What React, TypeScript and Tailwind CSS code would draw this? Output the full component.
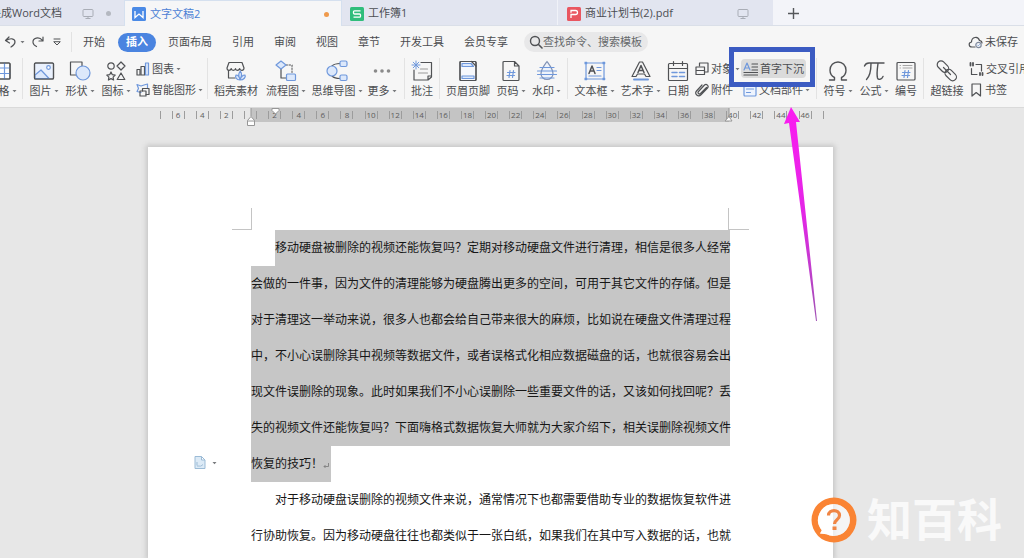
import type { ReactNode } from "react";

const INK = "#505255";
const BLUE = "#6f98dc";
const PALE = "#dce8fb";

function Svg({ children, w = 22, h = 22 }: { children: ReactNode; w?: number; h?: number }) {
  return (
    <svg
      width={w}
      height={h}
      viewBox={`0 0 ${w} ${h}`}
      fill="none"
      stroke={INK}
      strokeWidth="1.2"
      strokeLinecap="round"
      strokeLinejoin="round"
      className="shrink-0"
      aria-hidden="true"
    >
      {children}
    </svg>
  );
}

const icons = {
  table: (
    <Svg>
      <rect x="2" y="3" width="17" height="16" rx="1" fill="#fff" />
      <path d="M2 8h17M2 13.500h17M8 3v16M13.500 3v16" stroke={BLUE} />
      <rect x="2" y="3" width="17" height="16" rx="1" />
    </Svg>
  ),
  picture: (
    <Svg>
      <rect x="1.500" y="3" width="19" height="16" rx="1" fill="#eaf1fd" />
      <path d="M2 15l6-5 8 8.500H2z" fill={PALE} stroke={BLUE} />
      <circle cx="15.500" cy="7.500" r="1.800" stroke={BLUE} fill="#fff" />
      <rect x="1.500" y="3" width="19" height="16" rx="1" />
    </Svg>
  ),
  shape: (
    <Svg>
      <path d="M7 15H1.500V2H13v4" />
      <circle cx="14" cy="13" r="7" fill={PALE} stroke={BLUE} />
    </Svg>
  ),
  glyphs: (
    <Svg>
      <circle cx="6" cy="6" r="3.200" />
      <path d="M16 2l4 4-4 4-4-4z" />
      <path d="M6 12l1.300 2.700 2.900.4-2.100 2 .5 2.900L6 18.600 3.400 20l.5-2.900-2.100-2 2.900-.4z" />
      <path d="M16 13l3.800 6.500h-7.600z" />
    </Svg>
  ),
  store: (
    <Svg>
      <path d="M2 8l2-5.500h13L19 8c0 3-4 3-4.300.5C14 11 10.500 11 10.500 8.500 10 11 6.500 11 6.300 8.500 5.500 11 2 11 2 8z" />
      <path d="M3.500 10.500V18H10" />
      <path d="M15 20c-4 0-5-3-4-5 2 0 3.500 2 4 5zM15 20c4 0 6-3 5-5-2 0-4 2-5 5zM15 19c-2-3-2-5 .3-8 2 3 2 5-.3 8z" fill={PALE} stroke={BLUE} />
    </Svg>
  ),
  flow: (
    <Svg>
      <path d="M6 9v9h5" />
      <path d="M11 5h6v8" strokeDasharray="1.500 1.500" strokeWidth="1" />
      <path d="M6 1l5 4-5 4-5-4z" fill={PALE} stroke={BLUE} />
      <rect x="11.500" y="14" width="9" height="6.500" rx="1" fill={PALE} stroke={BLUE} />
    </Svg>
  ),
  mind: (
    <Svg>
      <path d="M6 6c2-2 4-2.500 8-2.500M6 16c2 2 4 2.500 8 2.500" />
      <circle cx="6" cy="11" r="5" fill={PALE} stroke={BLUE} />
      <rect x="14" y="1" width="7" height="5.500" rx="1.500" fill={PALE} stroke={BLUE} />
      <rect x="14" y="15" width="7" height="5.500" rx="1.500" fill={PALE} stroke={BLUE} />
    </Svg>
  ),
  more: (
    <Svg>
      <g fill="#8a8a8a" stroke="none">
        <circle cx="4.500" cy="11" r="1.800" />
        <circle cx="11" cy="11" r="1.800" />
        <circle cx="17.500" cy="11" r="1.800" />
      </g>
    </Svg>
  ),
  comment: (
    <Svg>
      <path d="M10 2.500h10.500V17l-3.500 3H3V10M20.500 16H17v4" />
      <path d="M9.500 9h7M7.500 13h9" stroke="#999" />
      <path d="M5 1v8M1 5h8M2.200 2.200l5.600 5.600M7.800 2.200L2.200 7.800" stroke={BLUE} strokeWidth="1" />
    </Svg>
  ),
  header: (
    <Svg>
      <rect x="3" y="1.500" width="16" height="19" rx="1" fill="#f6f8fc" />
      <path d="M5 3.500h9l2.500 3H5zM5 16h12v2.500H5z" fill={PALE} stroke={BLUE} />
      <path d="M14.500 1.500L19 6" />
      <rect x="3" y="1.500" width="16" height="19" rx="1" />
    </Svg>
  ),
  pageNo: (
    <Svg>
      <path d="M3 2.500a1 1 0 011-1h10.500L19 6v13.500a1 1 0 01-1 1H4a1 1 0 01-1-1zM14.500 1.500V6H19" />
      <path d="M10 10.500l-1 7M13.500 10.500l-1 7M7.500 12.500h7.500M7 15.500h7.500" stroke={BLUE} />
    </Svg>
  ),
  watermark: (
    <Svg>
      <path d="M11 1.500c4 5.500 6 8 6 12a6 6 0 01-12 0c0-4 2-6.500 6-12z" stroke="#8192b5" fill="#eef3fb" />
      <path d="M4 7.500h14M1.500 11h19M1.500 14.500h19M4 18h14" stroke={BLUE} />
    </Svg>
  ),
  textBox: (
    <Svg>
      <rect x="2" y="3" width="18" height="16" stroke={BLUE} />
      <path d="M5 13.500L8 6l3 7.500M6 11h4" stroke={INK} strokeWidth="1.500" />
      <path d="M13 7.500h4M13 10.500h4M5 16h12" stroke={BLUE} />
      <path d="M1 2h2v2H1zM19 2h2v2h-2zM1 18h2v2H1zM19 18h2v2h-2z" fill={BLUE} stroke={BLUE} strokeWidth=".5" />
    </Svg>
  ),
  wordArt: (
    <Svg>
      <path d="M9.500 2h3L20 16.500h-4l-1.500-2.500h-7L6 16.500H2z" />
      <path d="M8 12.500l3-7 3 7M9 10.500h4" strokeWidth="1.500" />
      <path d="M4 19.500h14" stroke={BLUE} strokeWidth="2" />
    </Svg>
  ),
  calendar: (
    <Svg>
      <rect x="1.500" y="3.500" width="19" height="17" rx="1" />
      <path d="M1.500 8.500h19M6.500 1.500v4M15.500 1.500v4" />
      <path d="M5 12.500h5M12.500 12.500h5M5 16.500h5M12.500 16.500h5" stroke={BLUE} strokeWidth="1.500" />
    </Svg>
  ),
  omega: (
    <Svg>
      <path d="M2.500 20h5v-2.500C4.500 16 3 13.500 3 10.300 3 5.500 6.500 2 11 2s8 3.500 8 8.300c0 3.200-1.500 5.700-4.500 7.200V20h5" strokeWidth="1.400" />
    </Svg>
  ),
  pi: (
    <Svg>
      <path d="M1.500 6C2.500 3.500 4 3 6 3h15M8 3.500C8 10 7 16 3.500 19.500M15 3.500c-1 7-1.500 11-.5 14.500.7 2 4 2 5.500-1.500" strokeWidth="1.400" />
    </Svg>
  ),
  numbering: (
    <Svg>
      <rect x="2" y="2.500" width="18" height="17.500" rx="1" />
      <path d="M5 5.500h.5M8 5.500h9M5 8h.5M8 8h9" stroke="#a5a5a5" strokeWidth="1" />
      <path d="M10 10.500l-1 7M13.500 10.500l-1 7M7.500 12.500h7.500M7 15.500h7.500" stroke={BLUE} />
    </Svg>
  ),
  link: (
    <Svg>
      <g transform="rotate(45 11 11)">
        <rect x="-1.500" y="7" width="13" height="7.500" rx="3.700" />
        <rect x="10" y="7.500" width="13" height="7.500" rx="3.700" />
        <path d="M6 11h10" />
      </g>
    </Svg>
  ),
  chart: (
    <Svg w={14} h={14}>
      <path d="M1 7.500h3V13H1z" />
      <path d="M5 4.500h3.500V13H5z" />
      <path d="M9.500 1H12.500v12h-3z" stroke={BLUE} fill={PALE} />
    </Svg>
  ),
  smart: (
    <Svg w={14} h={14}>
      <path d="M5 9.500L1 8.500l1.500-3L1 1.500l4 1.500 3-1 3.500-1V5" stroke={BLUE} />
      <rect x="4" y="8" width="6" height="5" />
      <path d="M6.500 8V5.500H13v6h-3" />
    </Svg>
  ),
  object: (
    <Svg w={14} h={14}>
      <path d="M4.500 4V1H13v9h-3" />
      <path d="M1 5h8.500v7.500H1zM1 8.500h8.500" />
    </Svg>
  ),
  clip: (
    <Svg w={14} h={14}>
      <path d="M11.500 4.500l-6 6c-1.500 1.300-3.300-.5-2-2L9.500 2c2-1.800 4.800 1 3 3l-6.500 6.800C3 14.500-.8 10.800 1.500 8L7 2" />
    </Svg>
  ),
  dropCap: (
    <Svg w={15} h={14}>
      <path d="M1 8L4 1l3 7M2 6h4" stroke={BLUE} />
      <path d="M9 2h5.500M9 5h5.500M9 8h5.500M1 10.500h13.500M1 13h13.500" />
    </Svg>
  ),
  parts: (
    <Svg w={14} h={14}>
      <rect x="1" y="1" width="12" height="12" rx="1" stroke={BLUE} fill="#eef4fe" />
      <path d="M3.500 6h7M3.500 9.500h4" stroke={BLUE} />
    </Svg>
  ),
  crossRef: (
    <Svg w={15} h={14}>
      <path d="M7 2.500h5.500V9M2.500 6.500v6H8" />
      <path d="M1.500 1v2.500M4 1v2.500M11 11v2M13.500 11v2" strokeWidth="1.800" />
    </Svg>
  ),
  bookmark: (
    <Svg w={14} h={14}>
      <path d="M3 1h8.500v12L7.200 9.500 3 13z" />
    </Svg>
  ),
};

function Caret() {
  return (
    <svg width="5" height="4" viewBox="0 0 5 4" className="ml-0.5 shrink-0" aria-hidden="true">
      <path d="M.5 1h4L2.500 3.200z" fill="#77797c" />
    </svg>
  );
}

function Tool({ icon, label, caret, className }: { icon: ReactNode; label: string; caret?: boolean; className: string }) {
  return (
    <button type="button" className={`flex shrink-0 flex-col items-center gap-px whitespace-nowrap pt-0.5 ${className}`}>
      {icon}
      <span className="flex items-center leading-4">
        {label}
        {caret && <Caret />}
      </span>
    </button>
  );
}

function SmallTool({ icon, label, caret, active }: { icon: ReactNode; label: string; caret?: boolean; active?: boolean }) {
  return (
    <button
      type="button"
      className={`flex h-5 items-center gap-0.5 whitespace-nowrap rounded-sm px-0.5 leading-4 ${active ? "bg-[#dbdbdb]" : ""}`}
    >
      {icon}
      <span className="flex items-center">
        {label}
        {caret && <Caret />}
      </span>
    </button>
  );
}

function Group({ children, last }: { children: ReactNode; last?: boolean }) {
  return (
    <div className={`flex shrink-0 px-[3px] ${last ? "" : "border-r border-[#e3e3e3]"}`}>{children}</div>
  );
}

function Stack({ children, className = "" }: { children: ReactNode; className?: string }) {
  return <div className={`flex shrink-0 flex-col items-start gap-0.5 pt-px ${className}`}>{children}</div>;
}

function Monitor() {
  return (
    <svg width="12" height="12" viewBox="0 0 12 12" fill="none" stroke="#a9adb6" aria-hidden="true">
      <rect x="1" y="1.500" width="10" height="7" rx="1" />
      <path d="M6 8.500v2M3.500 10.500h5" />
    </svg>
  );
}

function FileBadge({ color, path }: { color: string; path: string }) {
  return (
    <svg width="14" height="14" viewBox="0 0 14 14" fill="none" className="shrink-0" aria-hidden="true">
      <rect width="14" height="14" rx="1.500" fill={color} />
      <path d={path} stroke="#fff" strokeWidth="1.300" />
    </svg>
  );
}

function Tabs() {
  return (
    <nav className="flex h-[26px] shrink-0 items-stretch border-b border-[#dadfe8] bg-[#f3f4f9] text-[#4c4e53]">
      <a href="#word" className="flex w-[124px] shrink-0 items-center justify-end overflow-hidden whitespace-nowrap bg-[#e2e5f0] pr-[13px] pt-0.5">
        换成Word文档
        <span className="ml-5 flex items-center gap-3">
          <Monitor />
          <span className="size-[5px] rounded-full bg-[#b4b8c0]" />
        </span>
      </a>
      <a href="#doc" className="-mb-px flex w-[218px] shrink-0 items-center gap-1 border-x border-t border-[#d5e0ef] bg-[#f6f6f7] pl-[7px] pr-3 pt-px text-[#4b80d5]">
        <FileBadge color="#4a8ae6" path="M3 4v6.500L7 7l4 3.500V4" />
        文字文稿2
        <span className="ml-auto size-[5px] rounded-full bg-[#ef9a4c]" />
      </a>
      <a href="#sheet" className="flex w-[216px] shrink-0 items-center gap-1 border-r border-[#f0f2f8] bg-[#e2e5f0] pl-2 pt-0.5">
        <FileBadge color="#2fbd7b" path="M10.500 3.800H4.500a1 1 0 00-1 1V6a1 1 0 001 1h5a1 1 0 011 1v1.200a1 1 0 01-1 1h-6" />
        工作簿1
      </a>
      <a href="#pdf" className="flex w-[215px] shrink-0 items-center gap-1 bg-[#e2e5f0] pl-[9px] pr-6 pt-0.5">
        <FileBadge color="#e95660" path="M4 11V7.500h4.500a2 2 0 000-4H4v2.300" />
        商业计划书(2).pdf
        <span className="ml-auto">
          <Monitor />
        </span>
      </a>
      <button type="button" aria-label="新建" className="flex w-10 items-center justify-center pt-0.5">
        <svg width="11" height="11" viewBox="0 0 11 11" stroke="#55575b" strokeWidth="1.400" aria-hidden="true">
          <path d="M5.500 0v11M0 5.500h11" />
        </svg>
      </button>
    </nav>
  );
}

function Menu() {
  return (
    <div className="flex h-8 shrink-0 items-center whitespace-nowrap">
      <div className="flex h-5 w-[72px] shrink-0 items-center border-r border-[#e2e2e2] pl-1">
        <button type="button" aria-label="撤销" className="flex items-center">
          <Svg w={14} h={12}>
            <path d="M5 1L1.500 4.500 5.500 7M2 4.500C6 2 11 2 11 6c0 2-1.500 3.500-4 5" />
          </Svg>
          <Caret />
        </button>
        <button type="button" aria-label="恢复" className="ml-1.5">
          <Svg w={14} h={12}>
            <path d="M12 1v4H8M11.500 4.500C8 0 1.500 2 2 6.500c.2 2 1.500 3 3.500 4" />
          </Svg>
        </button>
        <button type="button" aria-label="自定义" className="ml-2">
          <Svg w={9} h={8}>
            <path d="M1 1h6M1 4l3 3 3-3z" strokeWidth="1" />
          </Svg>
        </button>
      </div>
      <button type="button" className="px-[11px]">开始</button>
      <button type="button" className="mx-0.5 flex h-[19px] w-[38px] items-center justify-center rounded-full bg-[#4a84e0] font-bold text-white">
        插入
      </button>
      {["页面布局", "引用", "审阅", "视图", "章节", "开发工具", "会员专享"].map((m) => (
        <button key={m} type="button" className="px-[10px]">
          {m}
        </button>
      ))}
      <label className="ml-1.5 flex h-5 w-[124px] items-center rounded-full bg-[#e8e8e9] pl-1">
        <Svg w={15} h={16}>
          <circle cx="7" cy="7" r="4.500" strokeWidth="1.400" />
          <path d="M10.500 10.500L14 14" strokeWidth="1.600" />
        </Svg>
        <input
          type="text"
          aria-label="搜索"
          placeholder="查找命令、搜索模板"
          className="w-full min-w-0 bg-transparent outline-none placeholder:text-[#66686b]"
        />
      </label>
      <button type="button" className="ml-auto flex items-center gap-0.5 pr-[6px]">
        <Svg w={15} h={14}>
          <path d="M7 12H4C.5 12 .2 7.500 3.500 7 3.500 2 10 .500 11.500 5.500c2 .3 2.500 1.500 2.500 2.500" />
          <circle cx="10.500" cy="10" r="2.700" stroke="#7f8a9d" />
          <path d="M9.500 10l.8.800 1.200-1.300" stroke={BLUE} strokeWidth=".8" />
        </Svg>
        未保存
      </button>
    </div>
  );
}

function Ribbon() {
  return (
    <div className="flex h-[50px] shrink-0 border-b border-[#dadada] pb-2">
      <Group>
        <Tool icon={icons.table} label="表格" caret className="-ml-[18px] w-[34px]" />
      </Group>
      <Group>
        <Tool icon={icons.picture} label="图片" caret className="w-9" />
        <Tool icon={icons.shape} label="形状" caret className="w-9" />
        <Tool icon={icons.glyphs} label="图标" caret className="w-9" />
        <Stack className="w-[70px]">
          <SmallTool icon={icons.chart} label="图表" caret />
          <SmallTool icon={icons.smart} label="智能图形" caret />
        </Stack>
      </Group>
      <Group>
        <Tool icon={icons.store} label="稻壳素材" className="w-[50px]" />
        <Tool icon={icons.flow} label="流程图" caret className="w-[50px]" />
        <Tool icon={icons.mind} label="思维导图" caret className="w-[52px]" />
        <Tool icon={icons.more} label="更多" caret className="w-[38px]" />
      </Group>
      <Group>
        <Tool icon={icons.comment} label="批注" className="w-7" />
      </Group>
      <Group>
        <Tool icon={icons.header} label="页眉页脚" className="w-[50px]" />
        <Tool icon={icons.pageNo} label="页码" caret className="w-9" />
        <Tool icon={icons.watermark} label="水印" caret className="w-[35px]" />
      </Group>
      <Group>
        <Tool icon={icons.textBox} label="文本框" caret className="w-[47px]" />
        <Tool icon={icons.wordArt} label="艺术字" caret className="w-[45px]" />
        <Tool icon={icons.calendar} label="日期" className="w-[30px]" />
        <Stack className="w-12">
          <SmallTool icon={icons.object} label="对象" caret />
          <SmallTool icon={icons.clip} label="附件" />
        </Stack>
        <Stack className="relative w-[72px]">
          <SmallTool icon={icons.dropCap} label="首字下沉" active />
          <SmallTool icon={icons.parts} label="文档部件" caret />
          <div className="pointer-events-none absolute -left-3 -top-[11px] h-10 w-[86px] border-5 border-[#3b5bc2]" />
        </Stack>
      </Group>
      <Group>
        <Tool icon={icons.omega} label="符号" caret className="w-9" />
        <Tool icon={icons.pi} label="公式" caret className="w-9" />
        <Tool icon={icons.numbering} label="编号" className="w-7" />
      </Group>
      <Group last>
        <Tool icon={icons.link} label="超链接" className="w-10" />
        <Stack>
          <SmallTool icon={icons.crossRef} label="交叉引用" />
          <SmallTool icon={icons.bookmark} label="书签" />
        </Stack>
      </Group>
    </div>
  );
}

const rulerMarks = Array.from({ length: 29 }, (_, i) => (i - 4) * 2);

function Ruler() {
  return (
    <div className="relative -ml-[6px] -mr-2 h-[14px] w-[699px] shrink-0 text-[8px] leading-[14px] text-[#5c5c5c]">
      <div className="absolute left-[109px] top-0 h-[14px] w-[478px] bg-[#c4c4c4]" />
      <div className="relative flex h-full items-center">
        {rulerMarks.map((n, i) => (
          <div key={n} className="flex flex-1 items-center justify-center">
            <span
              className={`flex h-2 w-[13px] items-center justify-center border-[#9c9c9c] ${i === 0 ? "border-r" : i === 28 ? "border-l" : "border-x"}`}
            >
              {n === 0 || i === 0 || i === 28 ? "" : Math.abs(n)}
            </span>
          </div>
        ))}
      </div>
      <svg width="10" height="19" viewBox="0 0 10 19" className="absolute left-[104px] top-0" fill="#fff" stroke="#969696" aria-hidden="true">
        <path d="M5 0v8" />
        <path d="M1.500 12.500L5 8.500l3.500 4v5h-7zM1.500 13h7" />
      </svg>
      <svg width="9" height="7" viewBox="0 0 9 7" className="absolute left-[129px] top-0" fill="#fff" stroke="#969696" aria-hidden="true">
        <path d="M1 .500h7v2L4.500 6 1 2.500z" />
      </svg>
      <svg width="9" height="14" viewBox="0 0 9 14" className="absolute left-[582px] top-0" fill="#fff" stroke="#969696" aria-hidden="true">
        <path d="M5 0v8M1 13l4-4.500 3 4.500z" />
      </svg>
    </div>
  );
}

const selected = [
  "会做的一件事,因为文件的清理能够为硬盘腾出更多的空间,可用于其它文件的存储。但是",
  "对于清理这一举动来说,很多人也都会给自己带来很大的麻烦,比如说在硬盘文件清理过程",
  "中,不小心误删除其中视频等数据文件,或者误格式化相应数据磁盘的话,也就很容易会出",
  "现文件误删除的现象。此时如果我们不小心误删除一些重要文件的话,又该如何找回呢?丢",
  "失的视频文件还能恢复吗?下面嗨格式数据恢复大师就为大家介绍下,相关误删除视频文件",
];

function wide(s: string) {
  return s.replace(/,/g, "\uff0c").replace(/\?/g, "\uff1f").replace(/!/g, "\uff01");
}

function Paper() {
  return (
    <article className="mt-[25px] min-h-0 w-[685px] flex-1 bg-white px-[103px] pt-[61px] text-[12px] leading-9 text-[#161616] shadow-[0_0_5px_2px_#c6c6c6]">
      <div className="-mx-[19px] flex h-[22px] justify-between">
        <div className="flex w-5 border-b border-r border-[#c4c4c4]" />
        <div className="flex w-[21px] border-b border-l border-[#c4c4c4]" />
      </div>
      <div className="relative whitespace-nowrap">
        <p className="ml-6 bg-[#c6c6c6]">{wide("移动硬盘被删除的视频还能恢复吗?定期对移动硬盘文件进行清理,相信是很多人经常")}</p>
        {selected.map((line) => (
          <p key={line} className="bg-[#c6c6c6]">
            {wide(line)}
          </p>
        ))}
        <p className="flex w-20 items-center bg-[#c6c6c6]">
          {wide("恢复的技巧!")}
          <svg width="6" height="6" viewBox="0 0 6 6" fill="none" stroke="#777" strokeWidth=".8" className="mt-1 shrink-0" aria-hidden="true">
            <path d="M5.500 0v3.500H1M2.500 2L1 3.500 2.500 5" />
          </svg>
        </p>
        <button type="button" aria-label="粘贴选项" className="absolute -left-[57px] top-[226px] flex items-center gap-1">
          <svg width="12" height="13" viewBox="0 0 12 13" fill="#dceaf6" stroke="#9bbbd6" aria-hidden="true">
            <path d="M1 .500h6.500L11 4v8.500H1zM7.500.500V4H11M3 9.500V6M3 10h4l2-1.500" />
          </svg>
          <Caret />
        </button>
      </div>
      <div className="whitespace-nowrap">
        <p className="ml-6">{wide("对于移动硬盘误删除的视频文件来说,通常情况下也都需要借助专业的数据恢复软件进")}</p>
        <p>{wide("行协助恢复。因为移动硬盘往往也都类似于一张白纸,如果我们在其中写入数据的话,也就")}</p>
      </div>
    </article>
  );
}

function Watermark() {
  return (
    <div className="pointer-events-none absolute bottom-[14px] right-[22px] flex items-center gap-[10px]">
      <svg width="46" height="46" viewBox="0 0 46 46" aria-hidden="true">
        <path
          fillRule="evenodd"
          d="M23 0.500a22.500 22.500 0 100 45 22.500 22.500 0 000-45zM23 7a16 16 0 11-7.500 30.200L9 36.500l1.800-3.200A16 16 0 0123 7z"
          fill="#fa8434"
        />
        <path d="M23 7a16 16 0 11-7.500 30.200L9 36.500l1.800-3.200A16 16 0 0123 7z" fill="#fff" fillOpacity=".6" />
        <path d="M17.500 18.500c0-6.500 11-6.500 11 0 0 4.500-5 4-5 8.500" fill="none" stroke="#f08544" strokeWidth="3.200" />
        <path d="M21.500 29.500h4v3.500h-4z" fill="#f08544" />
      </svg>
      <span className="text-[45px] font-bold leading-[48px] text-white/75">知百科</span>
    </div>
  );
}

export default function App() {
  return (
    <div className="relative flex h-screen flex-col overflow-hidden bg-[#f6f6f6] font-['Open_Sans','Noto_Sans_CJK_SC',sans-serif] text-[11px] text-[#4b4d50]">
      <Tabs />
      <Menu />
      <Ribbon />
      <main className="flex min-h-0 flex-1 flex-col items-center bg-[#e7e7e7] pr-[43px]">
        <div className="flex min-h-0 flex-1 flex-col">
          <Ruler />
          <Paper />
        </div>
      </main>
      <svg width="40" height="216" viewBox="0 0 40 216" className="pointer-events-none absolute left-[780px] top-[107px]" aria-hidden="true">
        <defs>
          <linearGradient id="arrow" x1="0" y1="0" x2="0" y2="1">
            <stop offset="0" stopColor="#fb1cf0" />
            <stop offset=".5" stopColor="#e326e6" />
            <stop offset="1" stopColor="#a052b4" />
          </linearGradient>
        </defs>
        <path d="M11 0L4 17l5-1 27 198h1L16 15l4 0z" fill="url(#arrow)" />
      </svg>
      <Watermark />
    </div>
  );
}
